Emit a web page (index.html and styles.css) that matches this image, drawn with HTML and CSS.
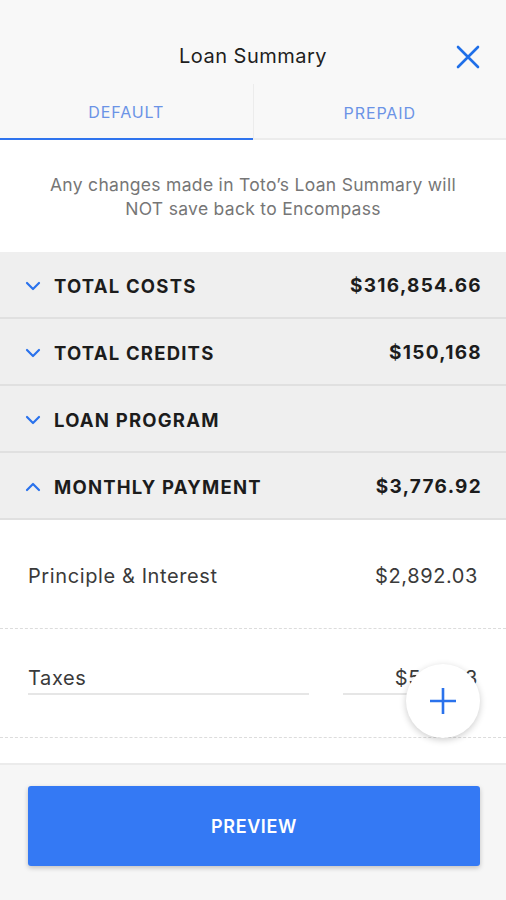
FILE: index.html
```html
<!DOCTYPE html>
<html lang="en">
  <head>
    <meta charset="UTF-8" />
    <meta name="viewport" content="width=device-width, initial-scale=1.0" />
    <title>Loan Summary</title>
    <link rel="stylesheet" href="styles.css">
  </head>
  <body>
    <div class="screen">
      <div class="topbar">
        <div class="title-row">
          <h1>Loan Summary</h1>
          <button class="close" type="button" aria-label="Close">
            <svg width="24" height="24" viewBox="0 0 24 24">
              <path d="M2 2 L22 22 M22 2 L2 22" stroke="#1f6fe8" stroke-width="2.6" stroke-linecap="round" fill="none" />
            </svg>
          </button>
        </div>
        <div class="tabs">
          <div class="tab active">DEFAULT</div>
          <div class="tab">PREPAID</div>
        </div>
      </div>

      <p class="notice">Any changes made in Toto’s Loan Summary will<br />NOT save back to Encompass</p>

      <div class="section">
        <span class="chev"><svg width="16" height="10" viewBox="0 0 16 10"><path d="M2 2 L8 8 L14 2" stroke="#2a72ec" stroke-width="2.2" fill="none" stroke-linecap="round" stroke-linejoin="round" /></svg></span>
        <span class="section-name">TOTAL COSTS</span>
        <span class="section-value">$316,854.66</span>
      </div>
      <div class="section">
        <span class="chev"><svg width="16" height="10" viewBox="0 0 16 10"><path d="M2 2 L8 8 L14 2" stroke="#2a72ec" stroke-width="2.2" fill="none" stroke-linecap="round" stroke-linejoin="round" /></svg></span>
        <span class="section-name">TOTAL CREDITS</span>
        <span class="section-value">$150,168</span>
      </div>
      <div class="section">
        <span class="chev"><svg width="16" height="10" viewBox="0 0 16 10"><path d="M2 2 L8 8 L14 2" stroke="#2a72ec" stroke-width="2.2" fill="none" stroke-linecap="round" stroke-linejoin="round" /></svg></span>
        <span class="section-name">LOAN PROGRAM</span>
        <span class="section-value"></span>
      </div>
      <div class="section">
        <span class="chev"><svg width="16" height="10" viewBox="0 0 16 10"><path d="M2 8 L8 2 L14 8" stroke="#2a72ec" stroke-width="2.2" fill="none" stroke-linecap="round" stroke-linejoin="round" /></svg></span>
        <span class="section-name">MONTHLY PAYMENT</span>
        <span class="section-value">$3,776.92</span>
      </div>

      <div class="details">
        <div class="detail-row">
          <span>Principle &amp; Interest</span>
          <span>$2,892.03</span>
        </div>
        <div class="detail-row edit">
          <span class="field name-field">Taxes</span>
          <span class="field amount-field">$558.33</span>
        </div>
      </div>

      <div class="footer">
        <button class="btn" type="button">PREVIEW</button>
      </div>

      <button class="fab" type="button" aria-label="Add">
        <svg width="30" height="30" viewBox="0 0 30 30">
          <path d="M15 2 V28 M2 15 H28" stroke="#2a72ec" stroke-width="2.6" fill="none" />
        </svg>
      </button>
    </div>
  </body>
</html>
```

FILE: styles.css
```css
body {
  margin: 0;
  font-family: Inter, "Liberation Sans", sans-serif;
  color: #222;
  background: #f7f7f7;
}

.screen {
  position: relative;
  width: 506px;
  height: 900px;
  overflow: hidden;
  background: #fff;
}

.topbar {
  background: #f8f8f8;
  padding-top: 28px;
}

.title-row {
  position: relative;
  height: 56px;
  display: flex;
  align-items: center;
  justify-content: center;
}

.title-row h1 {
  margin: 0;
  font-size: 20px;
  font-weight: 400;
  letter-spacing: 0.5px;
  color: #1e1e1e;
}

.close {
  position: absolute;
  right: 26px;
  top: 17px;
  padding: 0;
  border: none;
  background: none;
}

.tabs {
  display: flex;
  border-bottom: 2px solid #ececec;
}

.tab {
  flex: 1;
  height: 56px;
  display: flex;
  align-items: center;
  justify-content: center;
  font-size: 16px;
  letter-spacing: 0.9px;
  color: #6b93e6;
  box-sizing: border-box;
  border-left: 1px solid #ececec;
  margin-bottom: -2px;
  padding-top: 2px;
}

.tab.active {
  border-left: none;
  border-bottom: 2px solid #2f74ee;
}

.notice {
  margin: 0;
  padding: 33px 10px 31px;
  text-align: center;
  font-size: 17.5px;
  line-height: 24px;
  letter-spacing: 0.3px;
  color: #767676;
}

.section {
  display: flex;
  align-items: center;
  height: 67px;
  padding: 2px 24px 0 25px;
  box-sizing: border-box;
  background: #efefef;
  border-bottom: 2px solid #e0e0e0;
}

.chev {
  width: 29px;
  display: flex;
}

.section-name {
  flex: 1;
  font-size: 18.5px;
  font-weight: 700;
  letter-spacing: 1.2px;
  color: #1c1c1c;
}

.section-value {
  font-size: 19px;
  font-weight: 700;
  letter-spacing: 1.3px;
  color: #1c1c1c;
}

.details {
  background: #fff;
  padding-bottom: 25px;
}

.detail-row {
  display: flex;
  justify-content: space-between;
  align-items: center;
  height: 109px;
  padding: 4px 28px 0;
  box-sizing: border-box;
  font-size: 20px;
  letter-spacing: 0.6px;
  color: #3a3a3a;
  border-bottom: 1px dashed #dcdcdc;
}

.detail-row.edit {
  height: 109px;
  align-items: flex-start;
  padding-top: 37px;
  gap: 34px;
}

.field {
  padding-bottom: 3px;
  border-bottom: 2px solid #e6e6e6;
}

.name-field {
  flex: 1;
}

.amount-field {
  width: 135px;
  text-align: right;
}

.footer {
  background: #f6f6f6;
  border-top: 2px solid #ebebeb;
  padding: 21px 26px 40px 28px;
  height: 140px;
}

.btn {
  width: 100%;
  height: 80px;
  border: none;
  border-radius: 3px;
  background: #3479f4;
  color: #fff;
  font-family: inherit;
  font-size: 18px;
  font-weight: 600;
  letter-spacing: 0.6px;
  box-shadow: 0 2px 5px rgba(0, 0, 0, 0.22);
}

.fab {
  position: absolute;
  left: 406px;
  top: 664px;
  width: 74px;
  height: 74px;
  border: none;
  border-radius: 50%;
  background: #fff;
  box-shadow: 0 2px 7px rgba(0, 0, 0, 0.2);
  display: flex;
  align-items: center;
  justify-content: center;
  padding: 0;
}
```
